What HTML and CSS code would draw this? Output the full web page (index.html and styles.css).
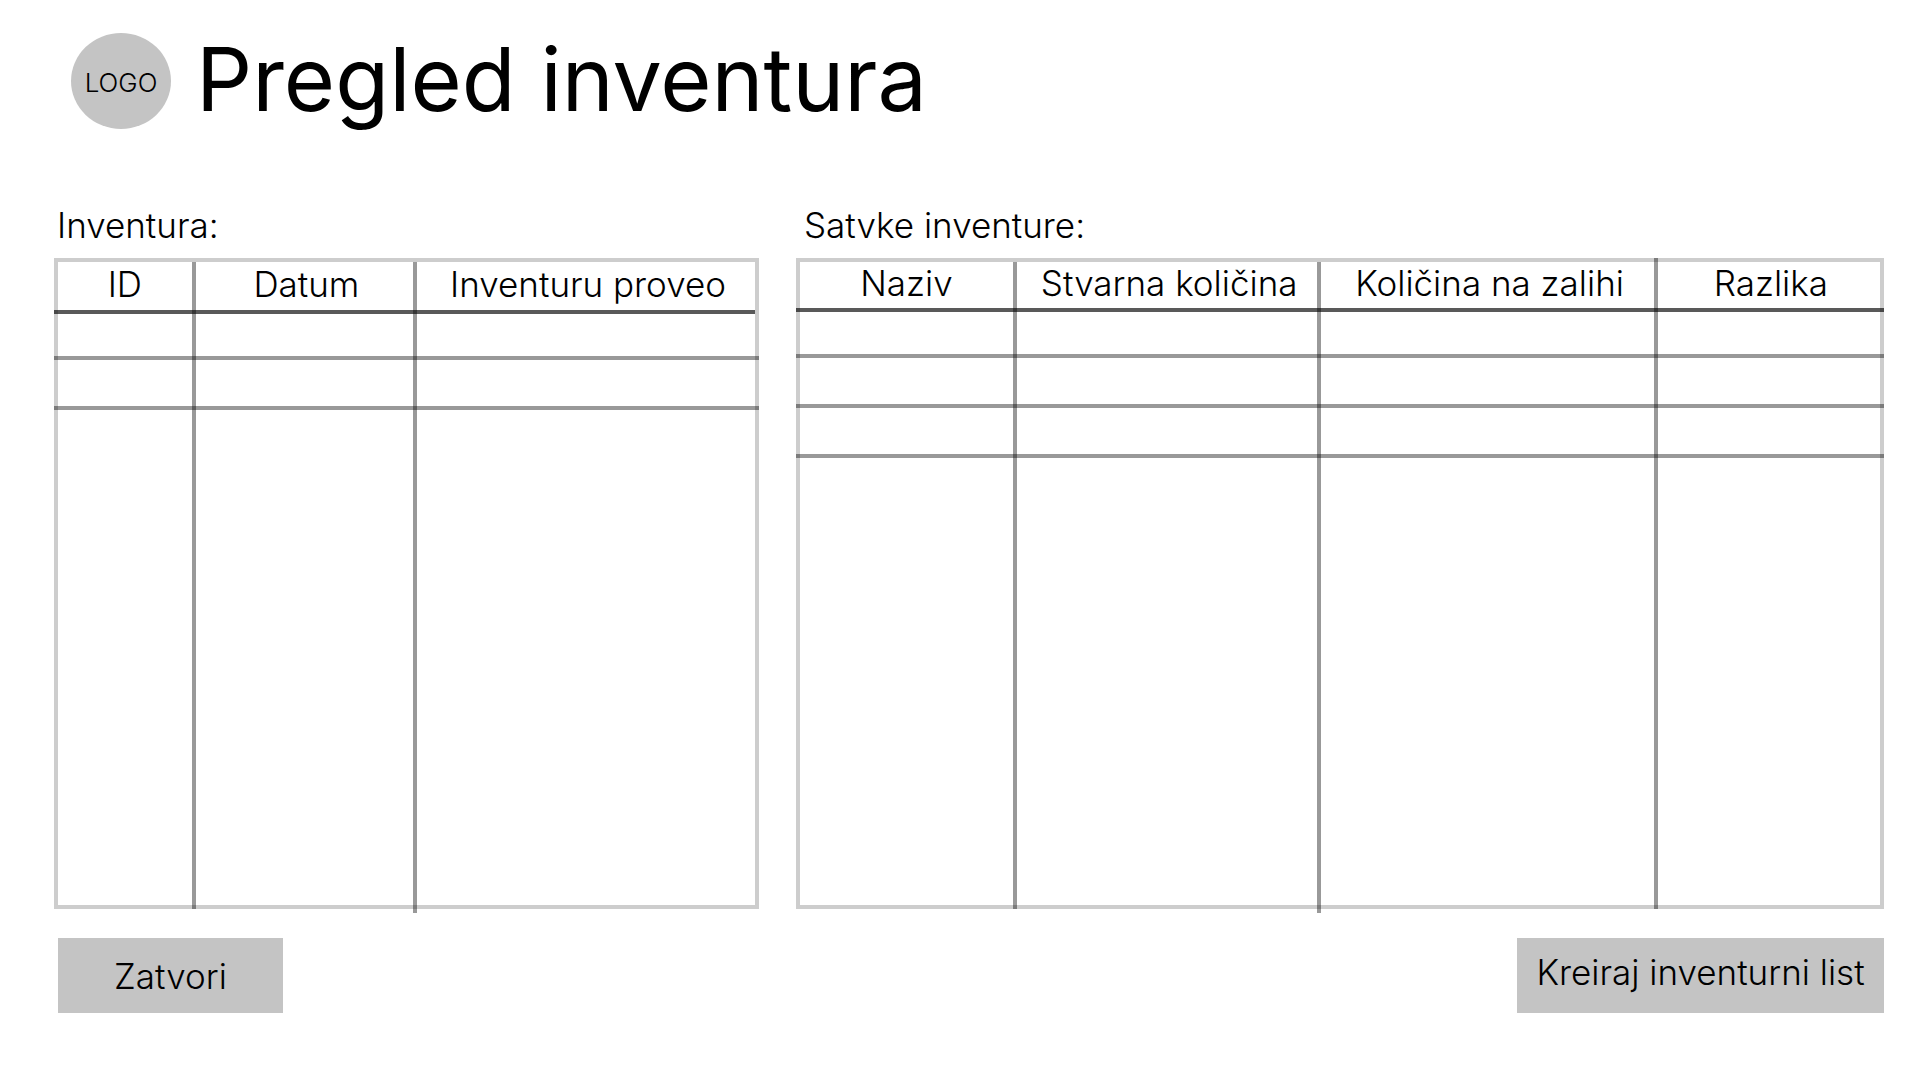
FILE: index.html
```html
<!DOCTYPE html>
<html lang="hr">
<head>
<meta charset="utf-8">
<meta name="viewport" content="width=device-width, initial-scale=1">
<title>Pregled inventura</title>
<link rel="stylesheet" href="styles.css">
</head>
<body>
<div class="page">
  <header class="header">
    <div class="logo">LOGO</div>
    <h1 class="title">Pregled inventura</h1>
  </header>
  <main class="panels">
    <section class="panel">
      <h2 class="label" id="inventura">Inventura:</h2>
      <table class="grid grid-inventura" aria-labelledby="inventura">
        <colgroup><col class="c-id"><col class="c-datum"><col></colgroup>
        <thead>
          <tr><th>ID</th><th>Datum</th><th>Inventuru proveo</th></tr>
        </thead>
        <tbody>
          <tr class="first"><td></td><td></td><td></td></tr>
          <tr><td></td><td></td><td></td></tr>
          <tr class="rest"><td></td><td class="long"></td><td></td></tr>
        </tbody>
      </table>
    </section>
    <section class="panel">
      <h2 class="label label-inset" id="stavke">Satvke inventure:</h2>
      <table class="grid grid-stavke" aria-labelledby="stavke">
        <colgroup><col class="c-naziv"><col class="c-stvarna"><col class="c-zaliha"><col></colgroup>
        <thead>
          <tr><th>Naziv</th><th>Stvarna količina</th><th class="full">Količina na zalihi</th><th>Razlika</th></tr>
        </thead>
        <tbody>
          <tr class="first"><td></td><td></td><td></td><td></td></tr>
          <tr><td></td><td></td><td></td><td></td></tr>
          <tr><td></td><td></td><td></td><td></td></tr>
          <tr class="rest"><td></td><td class="long"></td><td></td><td></td></tr>
        </tbody>
      </table>
    </section>
  </main>
  <footer class="actions">
    <button type="button" class="btn btn-close">Zatvori</button>
    <button type="button" class="btn btn-create">Kreiraj inventurni list</button>
  </footer>
</div>
</body>
</html>
```
FILE: styles.css
```css
:root {
  --frame: #cdcdcd;
  --line: rgba(0, 0, 0, 0.4);
  --head-line: rgba(0, 0, 0, 0.65);
  --fill: #c4c4c4;
}

* {
  box-sizing: border-box;
}

body {
  margin: 0;
  background: #fff;
  color: #000;
  font-family: Inter, "Open Sans", sans-serif;
  font-size: 35px;
  font-weight: 300;
  line-height: 40px;
}

.page {
  display: flex;
  flex-direction: column;
  min-height: 100vh;
  padding: 33px 41px 58px 54px;
}

.header {
  display: flex;
  align-items: center;
  gap: 25px;
  padding-left: 17px;
}

.logo {
  display: flex;
  align-items: center;
  justify-content: center;
  width: 100px;
  height: 96px;
  padding-top: 4px;
  border-radius: 50%;
  background: var(--fill);
  font-size: 26px;
}

.title {
  margin: 0;
  padding-bottom: 4px;
  font-size: 88px;
  font-weight: 400;
  line-height: 92px;
}

.panels {
  flex: 1;
  display: grid;
  grid-template-columns: 705fr 1088fr;
  gap: 37px;
  padding-top: 76px;
}

.panel {
  display: grid;
  grid-template-rows: auto 1fr;
  gap: 13px;
  min-width: 0;
}

.label {
  margin: 0;
  padding-left: 3px;
  font-size: 35px;
  font-weight: 300;
}

.label-inset {
  padding-left: 8px;
}

.grid {
  width: 100%;
  height: 100%;
  table-layout: fixed;
  border-spacing: 0;
  box-shadow: inset 0 0 0 4px var(--frame);
}

.c-id { width: 20.1%; }
.c-datum { width: 31.4%; }
.c-naziv { width: 20.3%; }
.c-stvarna { width: 28%; }
.c-zaliha { width: 30.9%; }

/* Rules are translucent so that they darken where they cross. */
.grid th,
.grid td {
  height: 50px;
  padding: 0;
  background:
    linear-gradient(var(--line), var(--line)) right bottom / 4px 100% no-repeat,
    linear-gradient(var(--line), var(--line)) left bottom / 100% 4px no-repeat;
}

.grid th {
  height: 54px;
  padding-bottom: 4px;
  font-weight: 300;
  white-space: nowrap;
  background:
    linear-gradient(var(--line), var(--line)) right bottom / 4px calc(100% - 4px) no-repeat,
    linear-gradient(var(--head-line), var(--head-line)) left bottom / 100% 4px no-repeat;
}

.grid-inventura th {
  height: 56px;
}

.grid th.full {
  background-size: 4px 100%, 100% 4px;
}

.grid .first td {
  height: 46px;
}

.grid th:last-child,
.grid td:last-child {
  background-size: 0 0, 100% 4px;
}

.grid-inventura th:last-child {
  background-size: 0 0, calc(100% - 4px) 4px;
}

.grid .rest td {
  position: relative;
  height: auto;
  background-size: 4px 100%, 0 0;
}

.grid .rest td:last-child {
  background: none;
}

.grid .long::after {
  content: "";
  position: absolute;
  top: 100%;
  right: 0;
  width: 4px;
  height: 4px;
  background: var(--line);
}

.actions {
  display: flex;
  justify-content: space-between;
  padding: 29px 0 0 4px;
}

.btn {
  height: 75px;
  border: 0;
  background: var(--fill);
  color: inherit;
  font: inherit;
  cursor: pointer;
}

.btn-close {
  width: 225px;
  padding: 0;
}

.btn-create {
  width: 367px;
  padding: 0 0 8px;
}
```
